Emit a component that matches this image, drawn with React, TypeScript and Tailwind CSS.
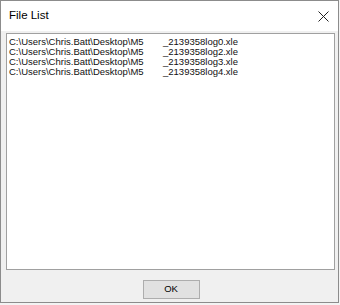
const files = [
  { dir: 'C:\\Users\\Chris.Batt\\Desktop\\M5', name: '_2139358log0.xle' },
  { dir: 'C:\\Users\\Chris.Batt\\Desktop\\M5', name: '_2139358log2.xle' },
  { dir: 'C:\\Users\\Chris.Batt\\Desktop\\M5', name: '_2139358log3.xle' },
  { dir: 'C:\\Users\\Chris.Batt\\Desktop\\M5', name: '_2139358log4.xle' }
];

const App = () => {
  return (
    <div className="w-[340px] h-[305px] bg-[#f3f3f3] font-['Liberation_Sans',Arial,sans-serif]">
      <div className="w-[339px] h-[303px] border border-[#8c8c8c] bg-[#f0f0f0] flex flex-col">
        {/* title bar */}
        <div className="h-[30px] bg-white flex items-center justify-between pl-[8px] pr-[9px]">
          <span className="text-[11.5px] text-black">File List</span>
          <svg width="11" height="11" viewBox="0 0 11 11" className="mt-[1px]">
            <path d="M0.5 0.5 L10.5 10.5 M10.5 0.5 L0.5 10.5" stroke="#222" strokeWidth="1" fill="none" />
          </svg>
        </div>

        {/* list box */}
        <div className="mt-[2px] ml-[5px] w-[329px] h-[237px] bg-white border border-[#a0a0a0] pt-[3px] pl-[2px]">
          {files.map((file, index) => (
            <div key={index} className="grid grid-cols-[154px_1fr] h-[10px] items-center text-[9.5px] leading-[10px] text-[#111]">
              <span className="whitespace-nowrap">{file.dir}</span>
              <span className="whitespace-nowrap">{file.name}</span>
            </div>
          ))}
        </div>

        {/* buttons */}
        <div className="mt-[10px] flex justify-center pl-[3px]">
          <button className="w-[57px] h-[19px] bg-[#e1e1e1] border border-[#adadad] text-[9.5px] text-black flex items-center justify-center">
            OK
          </button>
        </div>
      </div>
    </div>
  );
};

export default App;
